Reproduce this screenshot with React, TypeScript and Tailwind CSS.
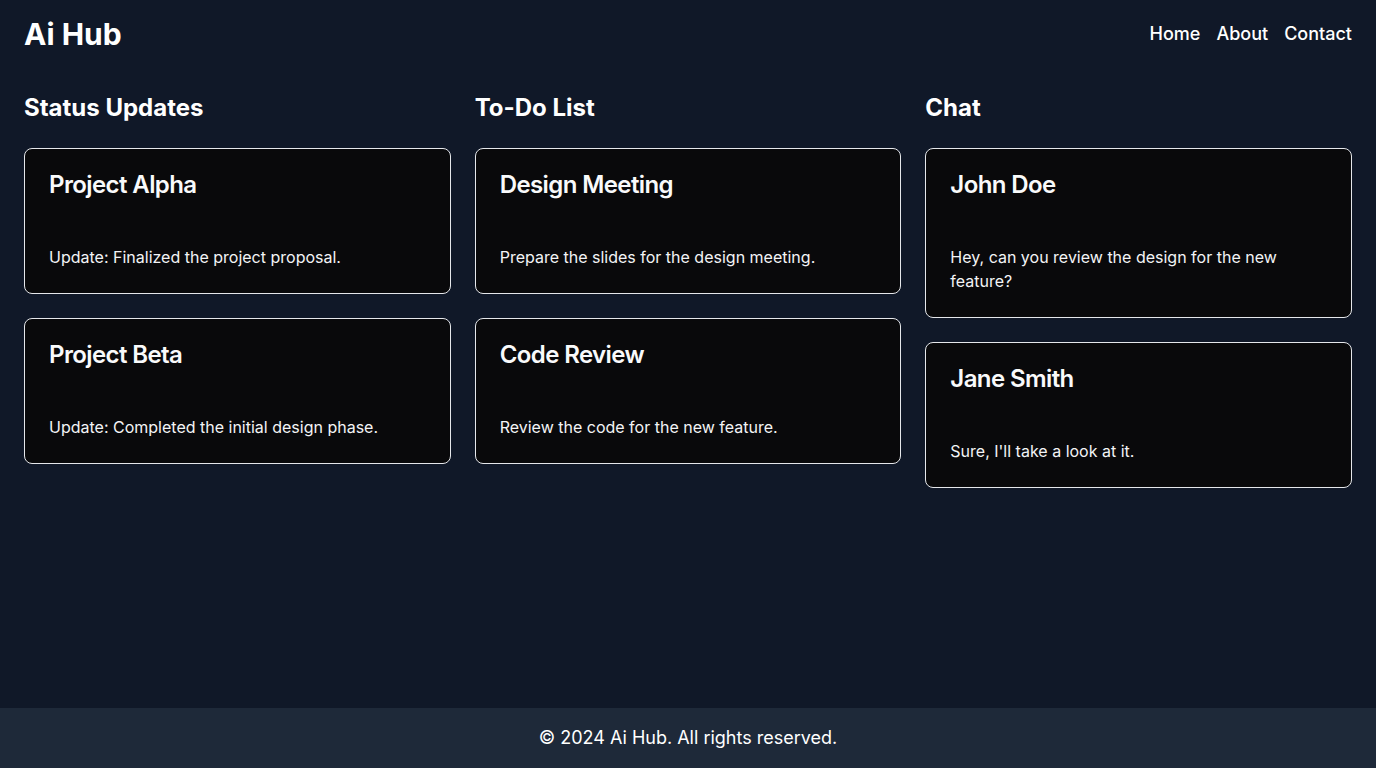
const statusUpdates = [
  { title: "Project Alpha", body: "Update: Finalized the project proposal." },
  { title: "Project Beta", body: "Update: Completed the initial design phase." },
]

const todos = [
  { title: "Design Meeting", body: "Prepare the slides for the design meeting." },
  { title: "Code Review", body: "Review the code for the new feature." },
]

const chats = [
  { title: "John Doe", body: "Hey, can you review the design for the new feature?" },
  { title: "Jane Smith", body: "Sure, I'll take a look at it." },
]

function Card({ title, body }: { title: string; body: string }) {
  return (
    <div className="rounded-lg border border-gray-200 bg-[#09090b] text-gray-50">
      <div className="p-6">
        <h3 className="text-2xl font-semibold leading-none tracking-tight">{title}</h3>
      </div>
      <div className="p-6">
        <p className="text-base leading-6 text-gray-100">{body}</p>
      </div>
    </div>
  )
}

function Column({ heading, items }: { heading: string; items: { title: string; body: string }[] }) {
  return (
    <section>
      <h2 className="text-2xl font-bold mb-6">{heading}</h2>
      <div className="flex flex-col gap-6">
        {items.map((it) => (
          <Card key={it.title} {...it} />
        ))}
      </div>
    </section>
  )
}

export default function App() {
  return (
    <div className="min-h-screen flex flex-col bg-gray-900 text-white font-['Inter',sans-serif]">
      <header className="flex items-center justify-between px-6 py-4">
        <h1 className="text-3xl font-bold">Ai Hub</h1>
        <nav className="flex gap-4 text-lg font-medium">
          <a href="#">Home</a>
          <a href="#">About</a>
          <a href="#">Contact</a>
        </nav>
      </header>
      <main className="flex-1 grid grid-cols-3 gap-6 p-6 content-start">
        <Column heading="Status Updates" items={statusUpdates} />
        <Column heading="To-Do List" items={todos} />
        <Column heading="Chat" items={chats} />
      </main>
      <footer className="bg-gray-800 py-4 text-center text-lg">
        © 2024 Ai Hub. All rights reserved.
      </footer>
    </div>
  )
}
